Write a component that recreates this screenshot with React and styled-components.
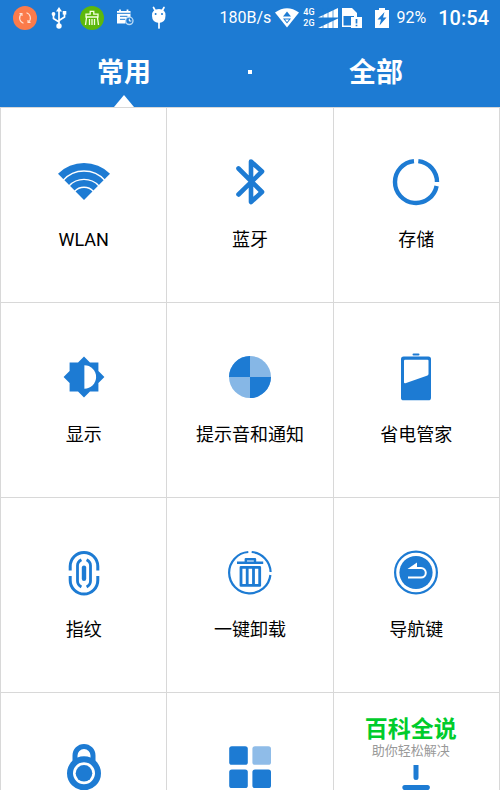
import React from "react";
import styled, { createGlobalStyle } from "styled-components";

const BLUE = "#1d7bd3";
const LIGHT = "#86b7e6";

const GlobalStyle = createGlobalStyle`
  * { box-sizing: border-box; }
  body {
    margin: 0;
    background: #fff;
    font-family: Roboto, "Noto Sans CJK SC", sans-serif;
  }
`;

const Page = styled.div`
  display: flex;
  flex-direction: column;
  height: 100vh;
  overflow: hidden;
`;

const Header = styled.header`
  flex: none;
  background: ${BLUE};
  color: #fff;
`;

const StatusBar = styled.div`
  display: flex;
  justify-content: space-between;
  height: 36px;
  padding: 0 11px 0 13px;
`;

const StatusGroup = styled.div`
  display: flex;
  align-items: center;
  gap: ${(p) => p.$gap}px;
`;

const StatusText = styled.span`
  font-size: ${(p) => p.$size}px;
  font-weight: ${(p) => (p.$strong ? 500 : 400)};
  line-height: 24px;
  white-space: nowrap;
`;

const Network = styled.span`
  display: flex;
  flex-direction: column;
  font-size: 9px;
  font-weight: 500;
  line-height: 11px;
`;

const Battery = styled.span`
  display: flex;
  align-items: center;
  gap: 8px;
  margin: 0 9px;
`;

const Glyph = styled.svg`
  display: block;
  flex: none;
`;

const Tabs = styled.nav`
  display: flex;
  align-items: center;
  height: 71px;
`;

const Tab = styled.button`
  position: relative;
  flex: 1;
  height: 71px;
  padding: 0 0 2px;
  border: 0;
  background: none;
  color: #fff;
  font: 700 27px/36px "Noto Sans CJK SC", sans-serif;
  cursor: pointer;

  &[aria-current="page"]::after {
    content: "";
    position: absolute;
    left: 50%;
    bottom: 0;
    transform: translateX(-50%);
    border: 10px solid transparent;
    border-top: 0;
    border-bottom: 12px solid #fff;
  }
`;

const Dot = styled.span`
  width: 4px;
  height: 4px;
  background: #fff;
`;

const Grid = styled.main`
  flex: none;
  display: grid;
  grid-template-columns: repeat(3, 1fr);
  gap: 1px;
  padding: 1px;
  background: #d8d8d8;
`;

const Cell = styled.div`
  position: relative;
  display: flex;
  background: #fff;
`;

const Tile = styled.button`
  flex: 1;
  display: flex;
  flex-direction: column;
  align-items: center;
  gap: 22px;
  height: 194px;
  padding: 50px 0 0;
  border: 0;
  background: none;
  color: #000;
  font: 400 18px/24px Roboto, "Noto Sans CJK SC", sans-serif;
  cursor: pointer;
`;

const Stamp = styled.div`
  position: absolute;
  top: 22px;
  left: 27px;
  display: flex;
  flex-direction: column;
  align-items: center;
  width: 100px;
  height: 50px;
  background: #fff;
  font-family: "Liberation Sans", "Noto Sans CJK SC", sans-serif;
  white-space: nowrap;
`;

const StampTitle = styled.strong`
  color: #00cc2c;
  font-size: 23px;
  font-weight: 700;
  line-height: 28px;
`;

const StampNote = styled.span`
  color: #999;
  font-size: 13px;
  line-height: 16px;
`;

const stroke = (width, cap = "butt") => ({
  fill: "none",
  stroke: BLUE,
  strokeWidth: width,
  strokeLinecap: cap,
  strokeLinejoin: "round",
});

const drawings = {
  wlan: (
    <>
      <path d="M0 17.9L-26 -8.3A37 37 0 0 1 26 -8.3Z" fill={BLUE} />
      <g fill="none" stroke="#fff" strokeWidth="1.3">
        <path d="M-21 -1.5A28 28 0 0 1 21 -1.5" />
        <path d="M-15 4A20.5 20.5 0 0 1 15 4" />
        <path d="M-9.5 9.5A12.7 12.7 0 0 1 9.5 9.5" />
      </g>
    </>
  ),
  bluetooth: (
    <path d="M-11.5 -13.5L12 10L1 20V-20.5L12 -10.5L-11.5 12.5" {...stroke(4.6, "round")} />
  ),
  storage: (
    <path d="M2.3 -20.9A21 21 0 0 1 21 0M20.6 4A21 21 0 1 1 -2 -20.9" {...stroke(4.4)} />
  ),
  display: (
    <>
      <path d="M-14.4 -14.4H14.4V14.4H-14.4ZM0 -20.4L20.4 0L0 20.4L-20.4 0Z" fill={BLUE} />
      <path d="M0.4 -11.7A11.7 11.7 0 0 1 0.4 11.7Z" fill="#fff" />
    </>
  ),
  sound: (
    <>
      <circle r="21" fill={LIGHT} />
      <path d="M0 0V-21A21 21 0 0 0 -21 0ZM0 0V21A21 21 0 0 0 21 0Z" fill={BLUE} />
    </>
  ),
  power: (
    <>
      <rect x="-3.5" y="-23.5" width="7" height="2" rx="1" fill={BLUE} />
      <rect x="-15" y="-20.5" width="30" height="43.8" rx="2.6" fill={BLUE} />
      <path d="M-11 -17.3H11.4Q12.5 -17.3 12.5 -16.2V-3Q12.5 -2 11.5 -1.6L-10.6 6.2Q-12 6.5 -12 5.2V-16.2Q-12 -17.3 -11 -17.3Z" fill="#fff" />
    </>
  ),
  fingerprint: (
    <>
      <path d="M-13.8 -1.5V-5.7A13.8 13.8 0 0 1 13.8 -5.7V-1.5M-13.8 4V8.3A13.8 13.8 0 0 0 13.8 8.3V4" {...stroke(3)} />
      <path d="M-2.6 -12.3Q-6.5 -10.3 -6.5 -6.5V9Q-6.5 12.8 -2.6 14.9M2.6 -12.3Q6.5 -10.3 6.5 -6.5V9Q6.5 12.8 2.6 14.9" {...stroke(2.8)} />
      <path d="M0 -4.4V6.7" {...stroke(4.4, "round")} />
    </>
  ),
  uninstall: (
    <>
      <path d="M1.7 -20A20.7 20.7 0 0 1 20.6 0M20.4 3A20.7 20.7 0 1 1 -1.7 -20" {...stroke(2.2)} />
      <path d="M-13 -9.3H13.2M-4.2 -9.5V-12.8H5V-9.5" {...stroke(2.4)} />
      <path d="M-9 -4.7H9.7V13.4H-9ZM-2.8 -5V13.6M3.5 -5V13.6" {...stroke(2.8)} />
    </>
  ),
  navigation: (
    <>
      <circle cy="0.5" r="20.9" {...stroke(2.2)} />
      <circle cy="0.5" r="16.6" fill={BLUE} />
      <path d="M-8 5.6H5A4.8 4.8 0 0 0 5 -4H-5" fill="none" stroke="#fff" strokeWidth="2" />
      <path d="M-8.5 -3L1 -9.5V-3Z" fill="#fff" />
    </>
  ),
  lock: (
    <>
      <path d="M-9 2V-11.5A9 9 0 0 1 9 -11.5V2" {...stroke(5)} />
      <circle cy="6.3" r="14" fill="#fff" stroke={BLUE} strokeWidth="6" />
      <circle cy="6.3" r="8.3" fill={BLUE} />
    </>
  ),
  apps: (
    <>
      <rect x="-20.8" y="-20.8" width="18.6" height="18.6" rx="2.6" fill={BLUE} />
      <rect x="2.4" y="-20.8" width="18.6" height="18.6" rx="2.6" fill="#8fbce8" />
      <rect x="-20.8" y="2.4" width="18.6" height="18.6" rx="2.6" fill={BLUE} />
      <rect x="2.4" y="2.4" width="18.6" height="18.6" rx="2.6" fill={BLUE} />
    </>
  ),
  more: <path d="M0 -18V10.6M-11.2 20.6H11.4" {...stroke(5, "round")} />,
};

const tiles = [
  { icon: "wlan", label: "WLAN" },
  { icon: "bluetooth", label: "蓝牙" },
  { icon: "storage", label: "存储" },
  { icon: "display", label: "显示" },
  { icon: "sound", label: "提示音和通知" },
  { icon: "power", label: "省电管家" },
  { icon: "fingerprint", label: "指纹" },
  { icon: "uninstall", label: "一键卸载" },
  { icon: "navigation", label: "导航键" },
  { icon: "lock" },
  { icon: "apps" },
  { icon: "more", stamp: true },
];

const notifications = [
  <>
    <circle cx="12" cy="12" r="12" fill="#fb7b4b" />
    <g fill="none" stroke="#ffe3d6" strokeWidth="1.1">
      <path d="M10.5 17.2A5.5 5.5 0 0 1 8.5 7.8M13.5 6.8A5.5 5.5 0 0 1 15.5 16.2" />
      <path d="M6.5 7.6H9V10M17.5 16.4H15V14" />
    </g>
  </>,
  <g fill="none" stroke="#fff" strokeWidth="1.7">
    <path d="M13 4V20M13 16L7.5 12.5V8M13 14.5L18.5 11V7" />
    <path d="M13 1L16 5.5H10Z" fill="#fff" stroke="none" />
    <circle cx="13" cy="20" r="2.7" fill="#fff" stroke="none" />
    <circle cx="7.5" cy="8" r="1.9" fill="#fff" stroke="none" />
    <path d="M16.7 5H20.3V8.6H16.7Z" fill="#fff" stroke="none" />
  </g>,
  <>
    <circle cx="13" cy="12" r="12" fill="#5cb80c" />
    <path d="M7 11H19V8.2H14.8V5.3H11.2V8.2H7ZM7.6 11L6.5 19M18.4 11L19.5 19M10.5 13V19M13 13V19M15.5 13V19" fill="none" stroke="#f4ffe0" strokeWidth="1.3" />
  </>,
  <>
    <path d="M5 5H18.5V12A5 5 0 0 0 13.5 17.5H5Z" fill="#fff" />
    <path d="M8 3.5V6M15.5 3.5V6" stroke="#fff" strokeWidth="1.8" />
    <path d="M5 7.3H18.5M8 10.3H15.5M8 13.3H13" stroke={BLUE} strokeWidth="1" />
    <circle cx="17.3" cy="14.8" r="3.7" fill={BLUE} stroke="#b9daf6" strokeWidth="1.3" />
    <path d="M17.3 12.6V15H19.3" fill="none" stroke="#fff" strokeWidth="1" />
  </>,
  <>
    <path d="M8.5 1.5L10.5 5M19 1.5L17 5M14 16V22" stroke="#fff" strokeWidth="1.7" strokeLinecap="round" />
    <path d="M7 9.5Q7 3 14 3Q20.5 3 20.5 9.5Q20.5 16.5 14 17Q7 16.5 7 9.5Z" fill="#fff" />
    <circle cx="10.6" cy="8" r="1" fill={BLUE} />
    <circle cx="17" cy="8" r="1" fill={BLUE} />
  </>,
];

function Status() {
  return (
    <StatusBar>
      <StatusGroup $gap={9}>
        {notifications.map((drawing, i) => (
          <Glyph key={i} width="24" height="24" viewBox="0 0 24 24" overflow="visible" aria-hidden="true">
            {drawing}
          </Glyph>
        ))}
      </StatusGroup>
      <StatusGroup $gap={3}>
        <StatusText $size={16}>180B/s</StatusText>
        <Glyph width="26" height="20" viewBox="0 0 26 20" aria-hidden="true">
          <path d="M1 4.5Q13 -4 25 4.5L13 19.5Z" fill="#fff" />
          <path d="M9 8.5L13 3.5L17 8.5ZM9 10.5H17L13 15.5Z" fill={BLUE} />
          <path d="M11 11.5H15L13 14Z" fill="#fff" />
        </Glyph>
        <Network>
          <span>4G</span>
          <span>2G</span>
        </Network>
        <Glyph width="20" height="20" viewBox="0 0 20 20" aria-hidden="true">
          <path d="M0 9.5L20 0V9.5ZM0 20L20 10.5V20Z" fill="#fff" />
          <path d="M5 0V20M10 0V20M15 0V20" stroke={BLUE} strokeWidth="0.7" />
        </Glyph>
        <Glyph width="22" height="22" viewBox="0 0 22 22" aria-hidden="true">
          <path d="M1 1H11L16 6V20H1Z" fill="#fff" />
          <path d="M2.5 9H13V18.5H2.5Z" fill={BLUE} />
          <path d="M10 10H21V21H10Z" fill="#fff" />
          <path d="M15.5 12V16.5M15.5 17.7V19.3" stroke={BLUE} strokeWidth="1.7" />
        </Glyph>
        <Battery>
          <Glyph width="14" height="20" viewBox="0 0 14 20" aria-hidden="true">
            <path d="M4 0H10V2H14V20H0V2H4Z" fill="#fff" />
            <path d="M9.5 4L2.5 11.5H6L4.5 17.5L11.5 9.5H8Z" fill={BLUE} />
          </Glyph>
          <StatusText $size={16}>92%</StatusText>
        </Battery>
        <StatusText $size={20} $strong>10:54</StatusText>
      </StatusGroup>
    </StatusBar>
  );
}

export default function App() {
  return (
    <>
      <GlobalStyle />
      <Page>
        <Header>
          <Status />
          <Tabs>
            <Tab type="button" aria-current="page">常用</Tab>
            <Dot />
            <Tab type="button">全部</Tab>
          </Tabs>
        </Header>
        <Grid>
          {tiles.map(({ icon, label, stamp }) => (
            <Cell key={icon}>
              <Tile type="button" aria-label={label || icon}>
                <Glyph width="56" height="48" viewBox="-28 -24 56 48" aria-hidden="true">
                  {drawings[icon]}
                </Glyph>
                {label && <span>{label}</span>}
              </Tile>
              {stamp && (
                <Stamp>
                  <StampTitle>百科全说</StampTitle>
                  <StampNote>助你轻松解决</StampNote>
                </Stamp>
              )}
            </Cell>
          ))}
        </Grid>
      </Page>
    </>
  );
}
